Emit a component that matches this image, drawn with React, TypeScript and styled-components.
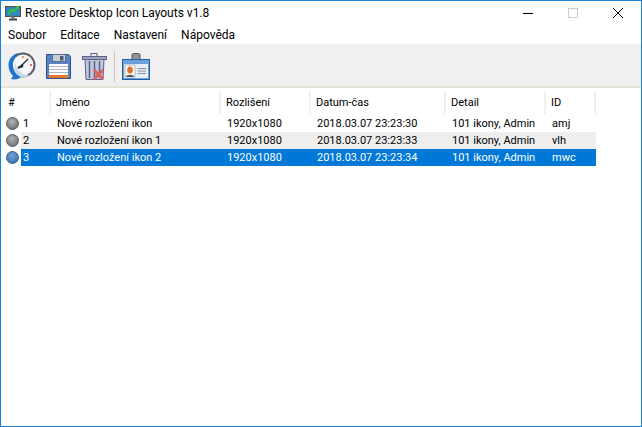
import styled, { createGlobalStyle } from 'styled-components'

const COLUMNS = '30px 170px 90px 135px 100px 50px'

const headers = ['#', 'Jméno', 'Rozlišení', 'Datum-čas', 'Detail', 'ID']

const layouts = [
  { no: 1, name: 'Nové rozložení ikon', res: '1920x1080', date: '2018.03.07 23:23:30', detail: '101 ikony, Admin', id: 'amj' },
  { no: 2, name: 'Nové rozložení ikon 1', res: '1920x1080', date: '2018.03.07 23:23:33', detail: '101 ikony, Admin', id: 'vlh' },
  { no: 3, name: 'Nové rozložení ikon 2', res: '1920x1080', date: '2018.03.07 23:23:34', detail: '101 ikony, Admin', id: 'mwc' },
]

const GlobalStyle = createGlobalStyle`
  html, body {
    margin: 0;
    padding: 0;
    background: #fff;
  }
`

const AppIcon = () => (
  <svg width="16" height="16" viewBox="0 0 16 16">
    <rect x="0.5" y="1.5" width="15" height="10" fill="#3f7f9f" stroke="#46525c" />
    <rect x="2" y="3" width="12" height="7" fill="#2a8fc0" />
    <path d="M3 9 L7 5 L9 6 L12 3" stroke="#37c13c" strokeWidth="2" fill="none" />
    <path d="M10 1 L14 1 L14 5 Z" fill="#37c13c" />
    <rect x="6.5" y="11.5" width="3" height="2" fill="#6a747c" />
    <rect x="4" y="13.5" width="8" height="2" fill="#3d454c" />
  </svg>
)

const ClockIcon = () => (
  <svg width="28" height="28" viewBox="0 0 28 28">
    <circle cx="15" cy="13" r="12.5" fill="#5b5e68" />
    <circle cx="15" cy="13" r="10.5" fill="#f4f6f9" />
    <path d="M6 22 A12 12 0 0 0 22 23 C16 24 9 20 7 10 Z" fill="#c8d8ea" />
    <path d="M11 1 C4 2 0 8 0.5 14 C1 19 3 22 5 24 L3 27 C7 28 11 27 13 25 C8 23 4 18 5 11 C5.5 7 8 3 11 1 Z" fill="#1d73d0" />
    <path d="M13 14 L20 7" stroke="#23262b" strokeWidth="1.3" />
    <path d="M14 14 L10 16" stroke="#23262b" strokeWidth="2" />
    <circle cx="14" cy="14" r="1.4" fill="#23262b" />
    <circle cx="15" cy="5" r="1" fill="#e88a2c" />
    <circle cx="23" cy="13" r="1" fill="#e23a3a" />
  </svg>
)

const SaveIcon = () => (
  <svg width="25" height="25" viewBox="0 0 25 25">
    <path d="M0.5 0.5 H22.5 L24.5 2.5 V24.5 H0.5 Z" fill="#5583c4" stroke="#2f4f8f" />
    <rect x="6.5" y="0.5" width="13" height="7" fill="#c9ced6" stroke="#5b6c8c" />
    <rect x="14" y="2" width="3.5" height="4.5" fill="#4a5a72" />
    <rect x="3" y="10" width="19" height="14" fill="#fbfbfb" />
    <path d="M3 12.5 H22 M3 15.5 H22 M3 18.5 H22" stroke="#b0b5bf" />
    <rect x="3" y="21" width="19" height="3" fill="#e8792a" />
  </svg>
)

const TrashIcon = () => (
  <svg width="25" height="27" viewBox="0 0 25 27">
    <rect x="9" y="0.5" width="6" height="3" fill="none" stroke="#5a5f8f" />
    <rect x="0.5" y="3.5" width="24" height="3" fill="#9ea6b8" stroke="#5a5f8f" />
    <path d="M3 6.5 H22 L21 26.5 H4 Z" fill="#c3c8d8" stroke="#5a5f8f" />
    <path d="M7.5 8 V25 M12.5 8 V25 M17.5 8 V25" stroke="#5a5f8f" strokeWidth="1.5" />
    <path d="M12 17 L21 26 M21 17 L12 26" stroke="#e0605c" strokeWidth="3" />
  </svg>
)

const CardIcon = () => (
  <svg width="28" height="27" viewBox="0 0 28 27">
    <rect x="10" y="0.5" width="8" height="8" rx="1.5" fill="#8e969c" stroke="#555" />
    <rect x="0.5" y="6.5" width="27" height="20" fill="#6f9fd8" stroke="#1f5ea8" />
    <rect x="2" y="11" width="24" height="14" fill="#e8eef5" />
    <rect x="3" y="12" width="10" height="12" fill="#f8f8f2" stroke="#b8bcc0" />
    <ellipse cx="8" cy="17" rx="2.8" ry="3.6" fill="#d9702c" />
    <path d="M4 24 C4 21 12 21 12 24 Z" fill="#555a5e" />
    <path d="M15.5 15.5 H24 M15.5 18 H24 M15.5 20.5 H24" stroke="#8c9096" />
  </svg>
)

const Ball = ({ selected }: { selected: boolean }) => (
  <svg width="13" height="13" viewBox="0 0 13 13">
    <defs>
      <radialGradient id={selected ? 'ballBlue' : 'ballGray'} cx="45%" cy="35%" r="70%">
        <stop offset="0" stopColor={selected ? '#74a5d6' : '#b4b4b4'} />
        <stop offset="1" stopColor={selected ? '#2f6dab' : '#6b6b6b'} />
      </radialGradient>
    </defs>
    <circle cx="6.5" cy="6.5" r="6" fill={`url(#${selected ? 'ballBlue' : 'ballGray'})`} stroke={selected ? '#42668c' : '#5e5e5e'} />
  </svg>
)

export default function App() {
  return (
    <Window>
      <GlobalStyle />
      <TitleBar>
        <TitleLeft>
          <AppIcon />
          <Title>Restore Desktop Icon Layouts v1.8</Title>
        </TitleLeft>
        <WindowButtons>
          <WindowButton>
            <svg width="10" height="10" viewBox="0 0 10 10">
              <path d="M0 5.5 H10" stroke="#000" />
            </svg>
          </WindowButton>
          <WindowButton>
            <svg width="10" height="10" viewBox="0 0 10 10">
              <rect x="0.5" y="0.5" width="9" height="9" fill="none" stroke="#ccc" />
            </svg>
          </WindowButton>
          <WindowButton>
            <svg width="10" height="10" viewBox="0 0 10 10">
              <path d="M0 0 L10 10 M10 0 L0 10" stroke="#000" />
            </svg>
          </WindowButton>
        </WindowButtons>
      </TitleBar>
      <MenuBar>
        <MenuItem>Soubor</MenuItem>
        <MenuItem>Editace</MenuItem>
        <MenuItem>Nastavení</MenuItem>
        <MenuItem>Nápověda</MenuItem>
      </MenuBar>
      <Toolbar>
        <ToolButton>
          <ClockIcon />
        </ToolButton>
        <ToolButton>
          <SaveIcon />
        </ToolButton>
        <ToolButton>
          <TrashIcon />
        </ToolButton>
        <ToolSeparator />
        <ToolButton>
          <CardIcon />
        </ToolButton>
      </Toolbar>
      <ListView>
        <HeaderRow>
          {headers.map((header) => (
            <HeaderCell key={header}>{header}</HeaderCell>
          ))}
        </HeaderRow>
        {layouts.map((row, index) => {
          const selected = index === layouts.length - 1
          return (
            <Row key={row.no}>
              <BallSlot>
                <Ball selected={selected} />
              </BallSlot>
              <RowBody $selected={selected} $striped={index % 2 === 1}>
                <NoCell>{row.no}</NoCell>
                <Cell>{row.name}</Cell>
                <Cell>{row.res}</Cell>
                <Cell>{row.date}</Cell>
                <Cell>{row.detail}</Cell>
                <Cell>{row.id}</Cell>
              </RowBody>
            </Row>
          )
        })}
      </ListView>
    </Window>
  )
}

const Window = styled.div`
  box-sizing: border-box;
  width: 642px;
  height: 427px;
  border: 1px solid #1883d7;
  background: #fff;
  overflow: hidden;
  font-family: Roboto, 'Noto Sans', sans-serif;
  color: #000;
`

const TitleBar = styled.div`
  height: 23px;
  display: flex;
  align-items: center;
  justify-content: space-between;
`

const TitleLeft = styled.div`
  display: flex;
  align-items: center;
  gap: 4px;
  padding-left: 4px;
`

const Title = styled.span`
  font-size: 12px;
  white-space: nowrap;
`

const WindowButtons = styled.div`
  display: flex;
  padding-right: 1px;
`

const WindowButton = styled.div`
  width: 45px;
  height: 23px;
  display: flex;
  align-items: center;
  justify-content: center;
`

const MenuBar = styled.div`
  height: 20px;
  display: flex;
  align-items: center;
  gap: 14px;
  padding: 1px 0 0 7px;
  box-sizing: border-box;
`

const MenuItem = styled.span`
  font-size: 12px;
`

const Toolbar = styled.div`
  height: 44px;
  box-sizing: border-box;
  display: flex;
  align-items: center;
  padding: 2px 0 0 3px;
  background: #f0f0f0;
  border-bottom: 2px solid #e5e3d6;
`

const ToolButton = styled.div`
  width: 36px;
  display: flex;
  align-items: center;
  justify-content: center;
`

const ToolSeparator = styled.div`
  width: 1px;
  height: 31px;
  margin: 0 3px 0 2px;
  background: #c9c7ba;
`

const ListView = styled.div`
  padding-top: 3px;
  font-family: Roboto, 'Liberation Sans', sans-serif;
  font-size: 11px;
`

const HeaderRow = styled.div`
  display: grid;
  grid-template-columns: 50px 170px 90px 135px 100px 50px;
  height: 23px;
  width: 595px;
  margin-bottom: 1px;
`

const HeaderCell = styled.div`
  display: flex;
  align-items: center;
  padding-left: 5px;
  border-right: 2px solid #f0f0f0;
  box-sizing: border-box;

  &:first-child {
    padding-left: 7px;
  }
`

const Row = styled.div`
  display: flex;
  height: 17px;
`

const BallSlot = styled.div`
  width: 20px;
  display: flex;
  align-items: center;
  padding-left: 5px;
  box-sizing: border-box;
`

const RowBody = styled.div<{ $selected: boolean; $striped: boolean }>`
  display: grid;
  grid-template-columns: ${COLUMNS};
  width: 575px;
  background: ${(props) => (props.$selected ? '#0078d7' : props.$striped ? '#eeeeee' : 'transparent')};
  color: ${(props) => (props.$selected ? '#fff' : '#000')};
`

const Cell = styled.div`
  display: flex;
  align-items: center;
  padding-left: 6px;
  white-space: nowrap;
  overflow: hidden;
`

const NoCell = styled(Cell)`
  padding-left: 2px;
`
